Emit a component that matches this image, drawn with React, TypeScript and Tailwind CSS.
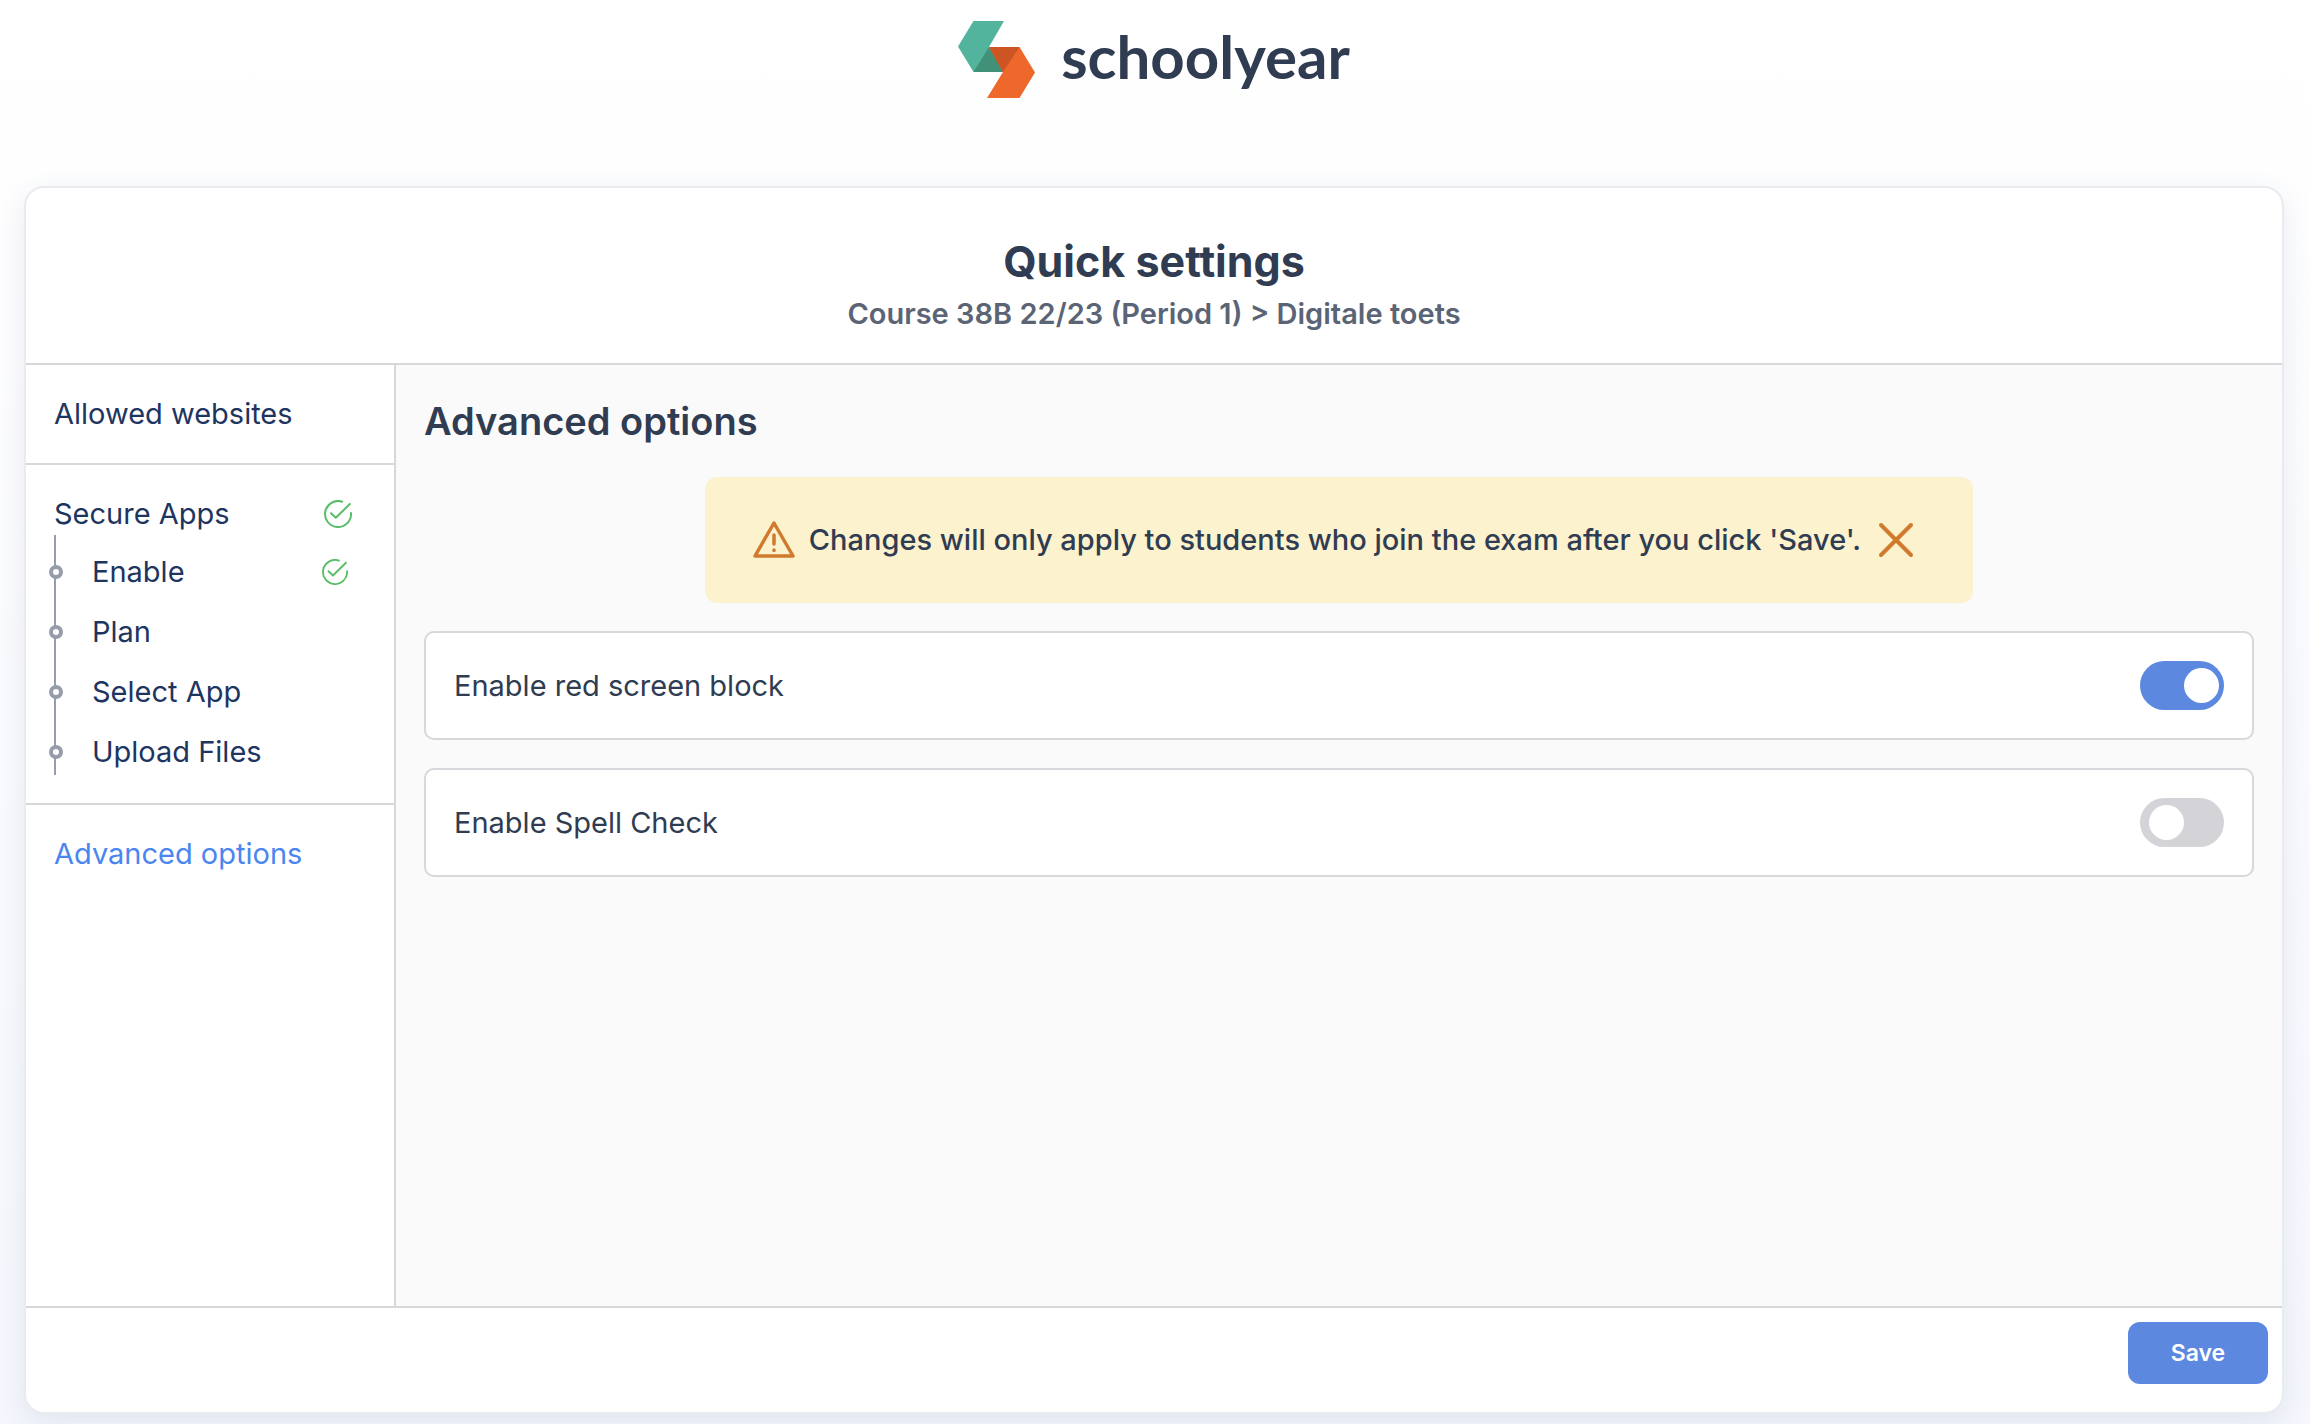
import { useState } from "react";

interface Step {
  name: string;
  done: boolean;
}

interface ToggleRowProps {
  id: string;
  label: string;
  defaultChecked: boolean;
}

const steps: Step[] = [
  { name: "Enable", done: true },
  { name: "Plan", done: false },
  { name: "Select App", done: false },
  { name: "Upload Files", done: false },
];

function Logo() {
  return (
    <svg viewBox="0 0 77 77" className="size-[77px]" aria-hidden="true">
      <path d="M15.5 0H46L31 26L46 51H15.5L0 25.5Z" fill="#52b49c" />
      <path d="M31 26L46 51H15.5Z" fill="#419179" />
      <path d="M31 26H61.5L77 51.5L61.5 77H29L45 51Z" fill="#ee682b" />
      <path d="M31 26H61.5L45 51Z" fill="#cd5423" />
    </svg>
  );
}

function CheckIcon({ className }: { className: string }) {
  return (
    <svg
      viewBox="0 0 28 28"
      fill="none"
      stroke="#57bd66"
      strokeWidth="2"
      strokeLinecap="round"
      strokeLinejoin="round"
      className={className}
      aria-label="Completed"
      role="img"
    >
      <path d="M18.2 1.7A13 13 0 1 0 27 13" />
      <path d="M7 13.2L11.8 17.8L25.8 4" />
    </svg>
  );
}

function WarningIcon() {
  return (
    <svg
      viewBox="0 0 42 42"
      fill="none"
      stroke="#cf7a2c"
      strokeWidth="3.5"
      strokeLinecap="round"
      strokeLinejoin="round"
      className="size-[42px] shrink-0"
      aria-hidden="true"
    >
      <path d="M21 4L40 37H2Z" />
      <path d="M21 16V25M21 31V31.5" />
    </svg>
  );
}

function ToggleRow({ id, label, defaultChecked }: ToggleRowProps) {
  return (
    <div className="flex items-center justify-between rounded-[10px] border-2 border-[#d7d7dc] bg-white px-7 py-7">
      <label htmlFor={id}>
        {label}
      </label>

      <input
        id={id}
        type="checkbox"
        role="switch"
        defaultChecked={defaultChecked}
        className="flex h-[49px] w-[84px] shrink-0 cursor-pointer appearance-none items-center rounded-full bg-[#d4d3d8] px-[9px] before:size-[35px] before:rounded-full before:bg-white checked:justify-end checked:bg-[#5c88e0] checked:px-[5px]"
      />
    </div>
  );
}

export default function App() {
  const [showNotice, setShowNotice] = useState(true);

  return (
    <div className="flex min-h-screen flex-col bg-linear-to-b from-white to-[#f5f7fd] pr-[26px] pb-[10px] pl-6 font-['Inter',sans-serif] text-[29px] leading-[42px] text-[#2f3c52]">

      <header className="flex h-[186px] shrink-0 items-start justify-center gap-[26px] pt-[21px]">
        <Logo />
        <span className="font-['Lato',sans-serif] text-[60px] leading-[70px] font-bold text-[#2f3c52]">
          schoolyear
        </span>
      </header>

      <main className="flex flex-1 flex-col overflow-hidden rounded-[20px] border-2 border-[#e9ebee] bg-white shadow-[0_8px_28px_rgba(50,65,110,0.1)]">

        <div className="border-b-2 border-[#d7d7dc] pt-[42px] pb-7 text-center">
          <h1 className="text-[43px] leading-[63px] font-bold">
            Quick settings
          </h1>
          <p className="font-semibold text-[#5b6475]">
            Course 38B 22/23 (Period 1) &gt; Digitale toets
          </p>
        </div>

        <div className="flex flex-1">

          <nav className="w-[370px] shrink-0 border-r-2 border-[#d7d7dc] text-[#1d355f]">

            <div className="border-b-2 border-[#d7d7dc] p-7">
              <a href="#websites">Allowed websites</a>
            </div>

            <div className="border-b-2 border-[#d7d7dc] p-7">
              <div className="flex items-center justify-between pr-[14px]">
                <a href="#apps">Secure Apps</a>
                <CheckIcon className="size-7" />
              </div>

              <ul className="border-l-2 border-[#969ca9]">
                {steps.map((step) => (
                  <li
                    key={step.name}
                    className="relative flex h-[60px] items-center justify-between pt-[14px] pr-[18px] pl-9"
                  >
                    <span className="absolute top-[30px] -left-[7px] size-[14px] rounded-full border-4 border-[#969ca9] bg-white" />
                    <a href="#apps">{step.name}</a>
                    {step.done && <CheckIcon className="size-[26px]" />}
                  </li>
                ))}
              </ul>
            </div>

            <div className="p-7">
              <a href="#advanced" className="text-[#4b86f0]">
                Advanced options
              </a>
            </div>

          </nav>

          <section className="flex flex-1 flex-col gap-7 bg-[#fafafa] p-7">

            <h2 className="text-[38px] leading-[56px] font-semibold">
              Advanced options
            </h2>

            {showNotice && (
              <div className="flex min-h-[126px] items-center gap-[14px] self-center rounded-xl bg-[#fcf2cd] pr-14 pl-12 font-medium">
                <WarningIcon />
                <p>
                  Changes will only apply to students who join the exam after you click 'Save'.
                </p>
                <button
                  type="button"
                  aria-label="Dismiss"
                  onClick={() => setShowNotice(false)}
                  className="shrink-0 cursor-pointer"
                >
                  <svg
                    viewBox="0 0 42 42"
                    fill="none"
                    stroke="#cf7a2c"
                    strokeWidth="4"
                    strokeLinecap="round"
                    className="size-[42px]"
                  >
                    <path d="M6 6L36 36M36 6L6 36" />
                  </svg>
                </button>
              </div>
            )}

            <ToggleRow id="red-screen" label="Enable red screen block" defaultChecked={true} />
            <ToggleRow id="spell-check" label="Enable Spell Check" defaultChecked={false} />

          </section>

        </div>

        <footer className="flex justify-end border-t-2 border-[#d7d7dc] px-[14px] pt-[14px] pb-7">
          <button
            type="button"
            className="h-[62px] w-[140px] cursor-pointer rounded-xl bg-[#5c88e0] text-[23px] font-semibold text-white"
          >
            Save
          </button>
        </footer>

      </main>

    </div>
  );
}
